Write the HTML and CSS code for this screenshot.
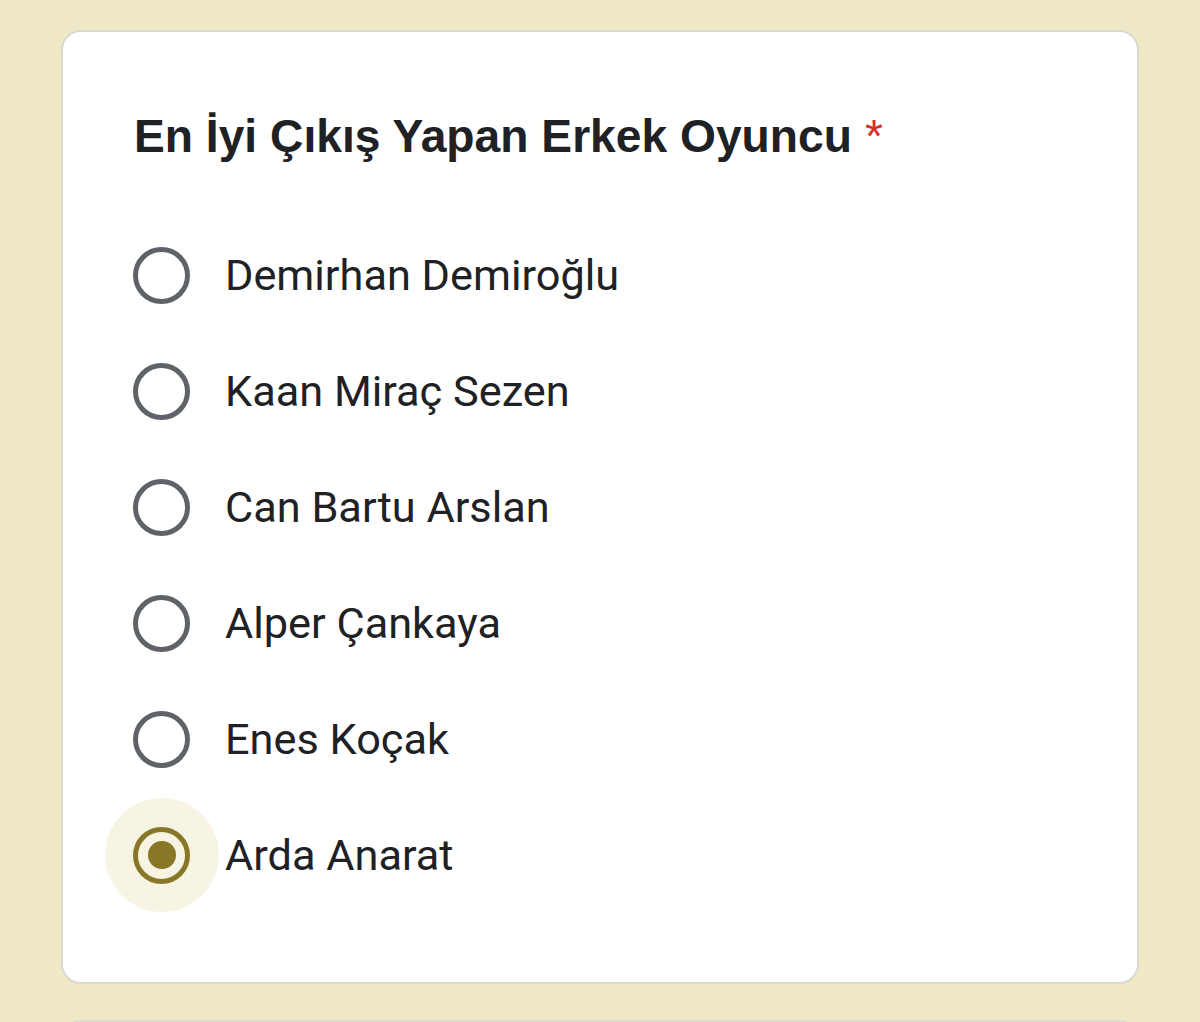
FILE: index.html
```html
<!DOCTYPE html>
<html lang="tr">
<head>
<meta charset="utf-8">
<title>Form</title>
<link rel="stylesheet" href="styles.css">
</head>
<body>
<div class="page">
  <div class="card">
    <h1 class="title">En İyi Çıkış Yapan Erkek Oyuncu<span class="req">*</span></h1>
    <div class="options">
      <label class="option"><span class="radio"><span class="ring"></span></span><span class="label">Demirhan Demiroğlu</span></label>
      <label class="option"><span class="radio"><span class="ring"></span></span><span class="label">Kaan Miraç Sezen</span></label>
      <label class="option"><span class="radio"><span class="ring"></span></span><span class="label">Can Bartu Arslan</span></label>
      <label class="option"><span class="radio"><span class="ring"></span></span><span class="label">Alper Çankaya</span></label>
      <label class="option"><span class="radio"><span class="ring"></span></span><span class="label">Enes Koçak</span></label>
      <label class="option checked"><span class="radio"><span class="halo"></span><span class="ring"><span class="dot"></span></span></span><span class="label">Arda Anarat</span></label>
    </div>
  </div>
  <div class="card next"></div>
</div>
</body>
</html>
```

FILE: styles.css
```css
html, body {
  margin: 0;
  padding: 0;
  background: #efe9c8;
}
.page {
  padding: 30px 61px 0 61px;
  height: 1022px;
  box-sizing: border-box;
  overflow: hidden;
}
.card {
  background: #ffffff;
  border: 2px solid #dcd9d0;
  border-radius: 20px;
  padding: 74px 72px 69px 71px;
  box-sizing: border-box;
}
.card.next {
  margin-top: 36px;
  height: 60px;
}
.title {
  margin: 0;
  font-family: "Liberation Sans", Arial, sans-serif;
  font-weight: bold;
  font-size: 46.2px;
  line-height: 60px;
  color: #202124;
}
.req {
  color: #d93025;
  font-weight: normal;
  margin-left: 13px;
}
.options {
  margin-top: 51px;
  display: flex;
  flex-direction: column;
}
.option {
  display: flex;
  align-items: center;
  height: 116px;
}
.radio {
  position: relative;
  width: 57px;
  height: 57px;
  flex: none;
  margin-left: -1px;
}
.ring {
  position: relative;
  display: block;
  width: 57px;
  height: 57px;
  border: 5.5px solid #5f6368;
  border-radius: 50%;
  box-sizing: border-box;
}
.checked .ring {
  border-color: #877726;
}
.halo {
  position: absolute;
  left: 50%;
  top: 50%;
  width: 114px;
  height: 114px;
  margin: -57px 0 0 -57px;
  border-radius: 50%;
  background: #f7f4e4;
}
.dot {
  position: absolute;
  left: 50%;
  top: 50%;
  width: 28px;
  height: 28px;
  margin: -14px 0 0 -14px;
  border-radius: 50%;
  background: #877726;
}
.label {
  margin-left: 35px;
  font-family: Roboto, "Liberation Sans", sans-serif;
  font-size: 43.3px;
  color: #202124;
}
```
